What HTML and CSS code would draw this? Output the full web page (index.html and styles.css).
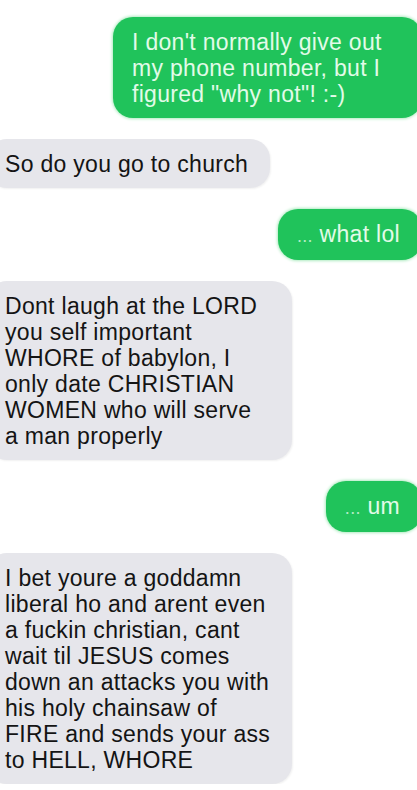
FILE: index.html
```html
<!DOCTYPE html>
<html lang="en">
<head>
    <meta charset="UTF-8">
    <meta name="viewport" content="width=device-width, initial-scale=1.0">
    <title>Messages</title>
    <link rel="stylesheet" href="styles.css">
</head>
<body>
    <div class="thread">
        <div class="msg out long">I don't normally give out<br>my phone number, but I<br>figured "why not"! :-)</div>
        <div class="msg in">So do you go to church</div>
        <div class="msg out"><span class="dots">...</span> what lol</div>
        <div class="msg in long">Dont laugh at the LORD<br>you self important<br>WHORE of babylon, I<br>only date CHRISTIAN<br>WOMEN who will serve<br>a man properly</div>
        <div class="msg out"><span class="dots">...</span> um</div>
        <div class="msg in long">I bet youre a goddamn<br>liberal ho and arent even<br>a fuckin christian, cant<br>wait til JESUS comes<br>down an attacks you with<br>his holy chainsaw of<br>FIRE and sends your ass<br>to HELL, WHORE</div>
    </div>
</body>
</html>
```

FILE: styles.css
```css
body {
    margin: 0;
    background-color: #ffffff;
    font-family: "Liberation Sans", Arial, sans-serif;
    overflow: hidden;
}
.thread {
    display: flex;
    flex-direction: column;
    gap: 21px;
    padding-top: 17px;
}
.msg {
    box-sizing: border-box;
    padding: 12px 22px 11px 18px;
    border-radius: 20px;
    font-size: 23px;
    line-height: 26px;
    letter-spacing: 0.3px;
    white-space: nowrap;
}
.msg.in {
    align-self: flex-start;
    margin-left: -13px;
    background-color: #e6e6eb;
    color: #141414;
    box-shadow: 1px 1px 2px rgba(0, 0, 0, 0.06);
}
.msg.in.long {
    width: 305px;
}
.msg.out {
    align-self: flex-end;
    margin-right: -5px;
    padding-left: 19px;
    background-color: #20c35b;
    color: #e2fbe8;
    box-shadow: 0 0 3px 1px #aeebc0;
}
.msg.out.long {
    width: 309px;
}
.dots {
    font-size: 18px;
    opacity: 0.75;
}
```
